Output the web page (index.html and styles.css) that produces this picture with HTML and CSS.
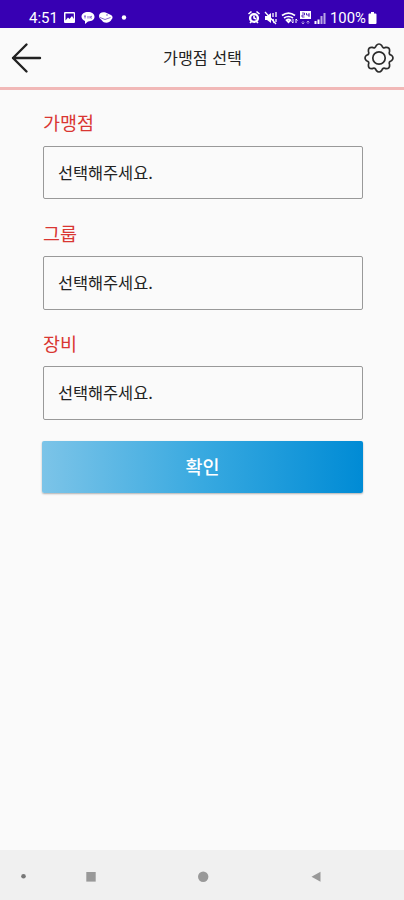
FILE: index.html
```html
<!DOCTYPE html>
<html lang="ko">
<head>
<meta charset="utf-8">
<title>가맹점 선택</title>
<link rel="stylesheet" href="styles.css">
</head>
<body>
<div class="status">
  <div class="status-left">
    <span class="time">4:51</span>
    <svg class="notifications" width="66" height="14" viewBox="0 0 66 14" fill="#fff">
      <path fill-rule="evenodd" d="M2 1h9a1 1 0 0 1 1 1v9a1 1 0 0 1-1 1H2a1 1 0 0 1-1-1V2a1 1 0 0 1 1-1zM2.500 2.500v7l2.500-3 1.500 1.500 2.500-3 1.800 3V2.500z"/>
      <path d="M25 1c3.800 0 6.500 2 6.500 4.800S28.800 10.500 25 10.500L22 13v-3C20 9.200 18.500 7.600 18.500 5.800 18.500 3 21.300 1 25 1z"/>
      <path d="M21 5h2M22 5v2.500M25 5v2.500M27 5v2.500M29 5l-1.500 1.200L29 7.500" stroke="#3700b3" stroke-width=".6" fill="none"/>
      <path d="M36 5c0-3 3-4.500 6.500-3.500L48 4c2 1 2 3.200.5 4.500-1 3.500-7.500 4.500-9.500 1L36.500 7z"/>
      <path d="M37 6.500l5 2 5.500-2M43 4h2" stroke="#3700b3" stroke-width=".6" fill="none"/>
      <circle cx="61" cy="6.500" r="2.200"/>
    </svg>
  </div>
  <div class="status-right">
    <svg width="82" height="16" viewBox="0 0 82 16" fill="none" stroke="#fff">
      <circle cx="7" cy="8" r="3.900" stroke-width="2.400"/>
      <path d="M1.500 4l3-2.500M9.500 1.500l3 2.500M3 13l1.500-1.500M11 13l-1.500-1.500M7 5.500V8l2 1" stroke-width="1.600"/>
      <path d="M18 6h2l4-3v10l-4-3h-2z" fill="#fff" stroke="none"/>
      <path d="M18 2l11 12M26 3v4M29 2v5M26 9l1 4M29 9v3" stroke-width="1.300"/>
      <path d="M35 5.500c4-3 9-3 13 0M37 8c3-2 6-2 9 0M39.500 10.200c1.300-1 2.700-1 4 0l-2 2z" stroke-width="1.700"/>
      <path d="M46 9v4l-1.500-1.500M49 13V9l1.500 1.500" stroke-width="1"/>
      <path d="M53 1h11v8H53z" fill="#fff" stroke="none"/>
      <path d="M55 3h2.500v2H55v2h2.500M59.500 3v2h3M62 3v4" stroke="#3700b3" stroke-width=".8"/>
      <path d="M56 14v-3M54.500 12.500L56 14l1.500-1.500M61 14v-3M59.500 12.500L61 11l1.500 1.500" stroke-width=".7" opacity=".7"/>
      <path d="M68.500 14v-3M71.500 14V9.500" stroke-width="2"/>
      <path d="M74.500 14V6M77.500 14V3" stroke-width="2" opacity=".65"/>
    </svg>
    <span class="percent">100%</span>
    <svg width="9" height="13" viewBox="0 0 9 13" fill="#fff"><path d="M3 0h3v1.500h1.500a1 1 0 0 1 1 1V11a1 1 0 0 1-1 1h-6a1 1 0 0 1-1-1V2.500a1 1 0 0 1 1-1H3z"/></svg>
  </div>
</div>
<header class="header">
  <svg width="32" height="32" viewBox="0 0 32 32" fill="none" stroke="#222" stroke-width="2.400" stroke-linecap="round" stroke-linejoin="round"><path d="M30 16H3M16.500 2.500L3 16l13.500 13.500"/></svg>
  <h1 class="title">가맹점 선택</h1>
  <svg width="32" height="32" viewBox="0 0 32 32" fill="none" stroke="#2b2b2b" stroke-width="1.700" stroke-linejoin="round">
    <path d="M13.200 3.600Q16 .4 18.800 3.600Q19.600 6.700 22.800 5.400Q26.900 5.100 26.600 9.200Q25.300 12.400 28.400 13.200Q31.600 16 28.400 18.800Q25.300 19.600 26.600 22.800Q26.900 26.900 22.800 26.600Q19.600 25.300 18.800 28.400Q16 31.600 13.200 28.400Q12.400 25.300 9.200 26.600Q5.100 26.900 5.400 22.800Q6.700 19.600 3.600 18.800Q.4 16 3.600 13.200Q6.700 12.400 5.400 9.200Q5.100 5.100 9.200 5.400Q12.400 6.700 13.200 3.600z"/>
    <circle cx="16" cy="16" r="6.200"/>
  </svg>
</header>
<main class="form">
  <div class="label">가맹점</div>
  <div class="select">선택해주세요.</div>
  <div class="label">그룹</div>
  <div class="select">선택해주세요.</div>
  <div class="label">장비</div>
  <div class="select">선택해주세요.</div>
  <button class="confirm">확인</button>
</main>
<nav class="navbar">
  <svg width="404" height="50" viewBox="0 0 404 50" fill="#999">
    <circle cx="23.500" cy="26.300" r="2.300" fill="#777"/>
    <rect x="86.300" y="22" width="9.400" height="9.600"/>
    <circle cx="203.200" cy="26.800" r="5.200"/>
    <path d="M311.500 26.800l9-5v10z"/>
  </svg>
</nav>
</body>
</html>
```
FILE: styles.css
```css
* { box-sizing: border-box; }
body {
  margin: 0;
  height: 900px;
  display: flex;
  flex-direction: column;
  background: #fafafa;
  color: #222;
  font-family: "Noto Sans CJK KR", sans-serif;
  overflow: hidden;
}
.status {
  height: 28px;
  flex: none;
  padding: 7px 27px 0 29px;
  display: flex;
  justify-content: space-between;
  background: #3700b3;
  color: #fff;
  font: 15px/22px Roboto, sans-serif;
}
.status-left, .status-right { display: flex; align-items: flex-start; }
.status-left svg { margin: 4px 0 0 5px; }
.time { width: 29px; }
.status-right svg { margin-top: 5px; }
.status-right svg:first-child { margin-top: 3px; }
.percent { width: 38px; margin-left: 1px; font-size: 14.800px; line-height: 23px; }
.header {
  height: 62px;
  flex: none;
  padding: 1px 9px 0 10px;
  display: flex;
  align-items: center;
  justify-content: space-between;
  border-bottom: 3px solid #f1b8b7;
}
.title {
  margin: 0;
  padding-bottom: 2px;
  font-size: 16.200px;
  font-weight: 400;
  line-height: 24px;
}
.form {
  flex: 1;
  padding: 20px 41px 0 42px;
}
.label {
  height: 26px;
  margin-bottom: 10px;
  padding-left: 1px;
  color: #d93632;
  font-size: 18.500px;
  line-height: 26px;
}
.label:first-child { line-height: 24px; }
.select {
  height: 54px;
  margin: 0 0 20px 1px;
  padding-left: 14px;
  border: 1px solid #999;
  border-radius: 2px;
  font-size: 16.400px;
  line-height: 51px;
  letter-spacing: -0.050px;
}
.label:first-child + .select { height: 53px; margin-bottom: 21px; line-height: 50px; }
.confirm {
  display: block;
  width: 321px;
  height: 52px;
  margin-top: 21px;
  padding: 0 0 2px;
  border: 0;
  border-radius: 2px;
  background: linear-gradient(90deg, #7cc4e8, #38a9e0 50%, #008bd5);
  box-shadow: 0 1px 2px rgba(0, 0, 0, .3);
  color: #fff;
  font: 500 18.500px/50px "Noto Sans CJK KR", sans-serif;
}
.navbar {
  height: 50px;
  flex: none;
  background: #f0f0f0;
}
.navbar svg { display: block; }
```
